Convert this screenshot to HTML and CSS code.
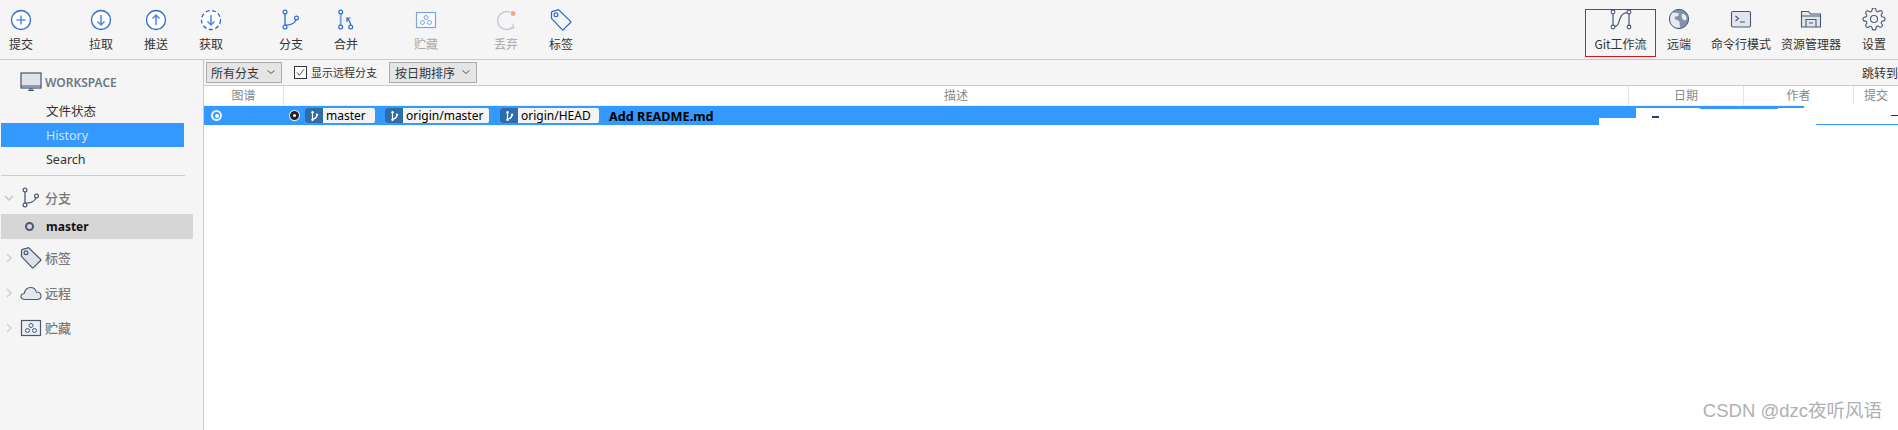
FILE: index.html
```html
<!DOCTYPE html>
<html lang="zh-CN">
<head>
    <meta charset="UTF-8">
    <title>SourceTree</title>
    <link rel="stylesheet" href="styles.css">
</head>
<body>
<svg class="defs">
  <symbol id="i-branch" viewBox="0 0 24 24">
    <path d="M6 5.800v11.400M6 17c6 .5 10-2 11-5.200" fill="none" stroke="currentColor" stroke-width="1.300"/>
    <circle cx="6" cy="4" r="1.900" fill="#fff" stroke="currentColor" stroke-width="1.200"/>
    <circle cx="6" cy="19" r="1.900" fill="#fff" stroke="currentColor" stroke-width="1.200"/>
    <circle cx="17.500" cy="10" r="1.900" fill="#fff" stroke="currentColor" stroke-width="1.200"/>
  </symbol>
  <symbol id="i-ref" viewBox="0 0 24 24">
    <path d="M9 5v14M9 18c5 0 8-3 9-7" fill="none" stroke="currentColor" stroke-width="2.400"/>
    <circle cx="9" cy="4.500" r="2.400" fill="currentColor"/>
    <circle cx="9" cy="19.500" r="2.400" fill="currentColor"/>
    <circle cx="18" cy="9.500" r="2.400" fill="currentColor"/>
  </symbol>
  <symbol id="i-tag" viewBox="0 0 24 24">
    <path d="M3.600 3.400L9 1.800c.4-.1.8 0 1 .3L21.600 13.400c.4.4.4.9 0 1.200l-7.300 7c-.3.3-.8.3-1.100 0L2.900 10.900c-.3-.2-.4-.5-.4-.9V4.500c0-.5.5-.9 1.100-1.100z" fill="var(--tag-fill, none)" stroke="currentColor" stroke-width="1.300"/>
    <circle cx="7" cy="6.800" r="1.900" fill="none" stroke="currentColor" stroke-width="1.200"/>
  </symbol>
  <symbol id="i-stash" viewBox="0 0 24 24">
    <rect x="2.500" y="4.500" width="19" height="15" fill="var(--stash-fill, none)" stroke="currentColor" stroke-width="1.200"/>
    <circle cx="12" cy="9.500" r="2" fill="none" stroke="currentColor" stroke-width="1"/>
    <circle cx="8.500" cy="14.500" r="2" fill="none" stroke="currentColor" stroke-width="1"/>
    <circle cx="15.500" cy="14.500" r="2" fill="none" stroke="currentColor" stroke-width="1"/>
  </symbol>
</svg>

<div class="app">
  <div class="toolbar">
    <div class="tool-group first">
      <div class="tool tool-small">
        <svg class="icon blue" viewBox="0 0 24 24"><circle cx="12" cy="12" r="9.500" fill="#fff" stroke="currentColor" stroke-width="1.300"/><path d="M12 7.500v9M7.500 12h9" stroke="#5b93e6" stroke-width="1.600"/></svg>
        <span>提交</span>
      </div>
    </div>
    <div class="tool-group">
      <div class="tool">
        <svg class="icon blue" viewBox="0 0 24 24"><circle cx="12" cy="12" r="9.500" fill="#fff" stroke="currentColor" stroke-width="1.300"/><path d="M12 7v9.500M8.500 13.500l3.500 3.500 3.500-3.500" fill="none" stroke="#4f8ae0" stroke-width="1.500"/></svg>
        <span>拉取</span>
      </div>
      <div class="tool">
        <svg class="icon blue" viewBox="0 0 24 24"><circle cx="12" cy="12" r="9.500" fill="#fff" stroke="currentColor" stroke-width="1.300"/><path d="M12 17V7.500M8.500 10.500L12 7l3.500 3.500" fill="none" stroke="#4f8ae0" stroke-width="1.500"/></svg>
        <span>推送</span>
      </div>
      <div class="tool">
        <svg class="icon blue" viewBox="0 0 24 24"><circle cx="12" cy="12" r="9.500" fill="#fff" stroke="currentColor" stroke-width="1.300" stroke-dasharray="4 2.500"/><path d="M12 7v9.500M8.500 13.500l3.500 3.500 3.500-3.500" fill="none" stroke="#4f8ae0" stroke-width="1.500"/></svg>
        <span>获取</span>
      </div>
    </div>
    <div class="tool-group">
      <div class="tool">
        <svg class="icon blue"><use href="#i-branch"/></svg>
        <span>分支</span>
      </div>
      <div class="tool">
        <svg class="icon blue" viewBox="0 0 24 24">
          <path d="M6.700 5.800v11.400" stroke="#7ba7ea" stroke-width="2"/>
          <path d="M16.700 17c0-3-1.500-4.500-3.200-6.500M13 14v-4h3.500" fill="none" stroke="currentColor" stroke-width="1.200"/>
          <circle cx="6.700" cy="4" r="1.900" fill="#fff" stroke="currentColor" stroke-width="1.200"/>
          <circle cx="6.700" cy="19" r="1.900" fill="#fff" stroke="currentColor" stroke-width="1.200"/>
          <circle cx="16.700" cy="19" r="1.900" fill="#fff" stroke="currentColor" stroke-width="1.200"/>
        </svg>
        <span>合并</span>
      </div>
    </div>
    <div class="tool-group">
      <div class="tool off">
        <svg class="icon stash-blue"><use href="#i-stash"/></svg>
        <span>贮藏</span>
      </div>
    </div>
    <div class="tool-group">
      <div class="tool off">
        <svg class="icon" viewBox="0 0 24 24">
          <path d="M16 4.200A9 9 0 1 0 19 19" fill="none" stroke="#c3c9d4" stroke-width="1.400"/>
          <path d="M14.500 20.500l5-.5-.5-4.500" fill="none" stroke="#c3c9d4" stroke-width="1.200"/>
          <circle cx="19" cy="5.500" r="2.400" fill="#f7a091"/>
        </svg>
        <span>丢弃</span>
      </div>
      <div class="tool">
        <svg class="icon blue"><use href="#i-tag"/></svg>
        <span>标签</span>
      </div>
    </div>
    <div class="tool-right">
      <div class="tool tool-git">
        <svg class="icon slate" viewBox="0 0 24 24">
          <path d="M4 5.800v11.400M20 5.800v11.400" fill="none" stroke="currentColor" stroke-width="1.200"/>
          <path d="M5.500 18.500C10 18 9.500 14 11 10.500S14 4.500 18.500 5" fill="none" stroke="currentColor" stroke-width="1.200"/>
          <circle cx="4" cy="4" r="1.900" fill="#fff" stroke="currentColor" stroke-width="1.100"/>
          <circle cx="4" cy="19" r="1.900" fill="#fff" stroke="currentColor" stroke-width="1.100"/>
          <circle cx="20" cy="4" r="1.900" fill="#fff" stroke="currentColor" stroke-width="1.100"/>
          <circle cx="20" cy="19" r="1.900" fill="#fff" stroke="currentColor" stroke-width="1.100"/>
        </svg>
        <span>Git工作流</span>
        <i class="red-box"></i>
      </div>
      <div class="tool tool-remote">
        <svg class="icon slate" viewBox="0 0 24 24">
          <circle cx="12" cy="11" r="9.600" fill="#8391ab" stroke="currentColor" stroke-width="1"/>
          <path d="M6 4.500c2 .5 4 0 5.500 1s-1 3-2.500 3-2 2-.5 3 3.500.5 4 2.500-.5 4 1 5.500c-3 .8-7-.3-9-3.500S2.500 7 6 4.500zM15 6c2-.5 4 1 4.500 3.500S18 13 16.500 12 14 7 15 6z" fill="#e8ebf1"/>
        </svg>
        <span>远端</span>
      </div>
      <div class="tool tool-term">
        <svg class="icon slate" viewBox="0 0 24 24">
          <rect x="2.500" y="3.500" width="19" height="15.500" rx="1.500" fill="#e1e5ed" stroke="currentColor" stroke-width="1.100"/>
          <path d="M6.500 8l3 2.500-3 2.500M11 14h5" fill="none" stroke="currentColor" stroke-width="1.100"/>
        </svg>
        <span>命令行模式</span>
      </div>
      <div class="tool tool-explorer">
        <svg class="icon slate" viewBox="0 0 24 24">
          <path d="M2.500 19V3.500h7l2 2.500h10v13z" fill="#e1e5ed" stroke="currentColor" stroke-width="1.100"/>
          <path d="M2.500 8h19M7 19v-7.500h10V19M10 15h4" fill="none" stroke="currentColor" stroke-width="1.100"/>
        </svg>
        <span>资源管理器</span>
      </div>
      <div class="tool tool-settings">
        <svg class="icon slate" viewBox="0 1 24 24">
          <circle cx="12" cy="12" r="3.500" fill="none" stroke="currentColor" stroke-width="1.100"/>
          <path d="M19.400 15a1.650 1.650 0 0 0 .33 1.820l.06.06a2 2 0 0 1 0 2.830 2 2 0 0 1-2.830 0l-.06-.06a1.650 1.650 0 0 0-1.820-.33 1.650 1.650 0 0 0-1 1.510V21a2 2 0 0 1-2 2 2 2 0 0 1-2-2v-.09A1.650 1.650 0 0 0 9 19.400a1.650 1.650 0 0 0-1.820.33l-.06.06a2 2 0 0 1-2.830 0 2 2 0 0 1 0-2.830l.06-.06a1.650 1.650 0 0 0 .33-1.820 1.650 1.650 0 0 0-1.510-1H3a2 2 0 0 1-2-2 2 2 0 0 1 2-2h.09A1.650 1.650 0 0 0 4.600 9a1.650 1.650 0 0 0-.33-1.820l-.06-.06a2 2 0 0 1 0-2.830 2 2 0 0 1 2.830 0l.06.06a1.650 1.650 0 0 0 1.820.33H9a1.650 1.650 0 0 0 1-1.510V3a2 2 0 0 1 2-2 2 2 0 0 1 2 2v.09a1.650 1.650 0 0 0 1 1.510 1.650 1.650 0 0 0 1.820-.33l.06-.06a2 2 0 0 1 2.830 0 2 2 0 0 1 0 2.830l-.06.06a1.650 1.650 0 0 0-.33 1.820V9a1.650 1.650 0 0 0 1.510 1H21a2 2 0 0 1 2 2 2 2 0 0 1-2 2h-.09a1.650 1.650 0 0 0-1.510 1z" fill="none" stroke="currentColor" stroke-width="1.100"/>
        </svg>
        <span>设置</span>
      </div>
    </div>
  </div>

  <div class="main">
    <div class="sidebar">
      <div class="ws-head">
        <svg class="side-icon" viewBox="0 0 24 24">
          <rect x="2" y="2" width="20" height="15" fill="#e0e3ea" stroke="#44546f" stroke-width="1.200"/>
          <path d="M2 15h20M9 19.500h6M11 17v2.500M13 17v2.500" fill="none" stroke="#44546f" stroke-width="1.200"/>
        </svg>
        <span>WORKSPACE</span>
      </div>
      <div class="ws-item">文件状态</div>
      <div class="ws-item active">History</div>
      <div class="ws-item">Search</div>
      <div class="side-line"></div>

      <div class="side-group open">
        <svg class="chev" viewBox="0 0 10 10"><path d="M1 3l4 4 4-4" fill="none" stroke="#c4c4c4" stroke-width="1.500"/></svg>
        <svg class="side-icon slate"><use href="#i-branch"/></svg>
        <span>分支</span>
      </div>
      <div class="branch-row"><i class="branch-dot"></i>master</div>
      <div class="side-group">
        <svg class="chev" viewBox="0 0 10 10"><path d="M3 1l4 4-4 4" fill="none" stroke="#d0d0d0" stroke-width="1.500"/></svg>
        <svg class="side-icon slate tag-fill"><use href="#i-tag"/></svg>
        <span>标签</span>
      </div>
      <div class="side-group">
        <svg class="chev" viewBox="0 0 10 10"><path d="M3 1l4 4-4 4" fill="none" stroke="#d0d0d0" stroke-width="1.500"/></svg>
        <svg class="side-icon slate" viewBox="0 0 24 24"><path d="M6 18.500c-2.500 0-4-1.300-4-3s1.300-3 3.200-3C6 9 8.500 6.500 11.500 6.500c3.300 0 5.300 2.300 5.800 4.500 2.800 0 4.700 1.800 4.700 4s-1.500 3.500-4 3.500z" fill="#e4e7ee" stroke="currentColor" stroke-width="1.100"/></svg>
        <span>远程</span>
      </div>
      <div class="side-group">
        <svg class="chev" viewBox="0 0 10 10"><path d="M3 1l4 4-4 4" fill="none" stroke="#d0d0d0" stroke-width="1.500"/></svg>
        <svg class="side-icon slate stash-fill"><use href="#i-stash"/></svg>
        <span>贮藏</span>
      </div>
    </div>

    <div class="content">
      <div class="filter-bar">
        <div class="select select-branch">所有分支<svg class="caret" viewBox="0 0 10 10"><path d="M1.500 3.500L5 6.500l3.500-3" fill="none" stroke="#555" stroke-width="1"/></svg></div>
        <label class="check"><i class="check-box"><svg viewBox="0 0 14 14"><path d="M2.500 7l3 3.500 6-7.500" fill="none" stroke="#333" stroke-width="1.100"/></svg></i>显示远程分支</label>
        <div class="select select-sort">按日期排序<svg class="caret" viewBox="0 0 10 10"><path d="M1.500 3.500L5 6.500l3.500-3" fill="none" stroke="#555" stroke-width="1"/></svg></div>
        <div class="jump">跳转到</div>
      </div>
      <div class="log-head">
        <div class="col col-graph">图谱</div>
        <div class="col col-desc">描述</div>
        <div class="col col-date">日期</div>
        <div class="col col-author">作者</div>
        <div class="col col-commit">提交</div>
      </div>
      <div class="log-row">
        <i class="radio"></i>
        <i class="node"></i>
        <div class="ref ref-master"><span class="ref-badge"><svg class="ref-icon"><use href="#i-ref"/></svg></span><span>master</span></div>
        <div class="ref ref-origin"><span class="ref-badge"><svg class="ref-icon"><use href="#i-ref"/></svg></span><span>origin/master</span></div>
        <div class="ref ref-head"><span class="ref-badge"><svg class="ref-icon"><use href="#i-ref"/></svg></span><span>origin/HEAD</span></div>
        <b class="subject">Add README.md</b>
        <!-- painted-over part of the screenshot -->
        <i class="wipe wipe-a"></i>
        <i class="wipe wipe-b"></i>
        <i class="wipe wipe-c"></i>
        <i class="strip strip-a"></i>
        <i class="strip strip-b"></i>
        <i class="strip strip-c"></i>
        <i class="tick tick-a"></i>
        <i class="tick tick-b"></i>
      </div>
    </div>
  </div>
  <div class="watermark">CSDN @dzc夜听风语</div>
</div>
</body>
</html>
```

FILE: styles.css
```css
* {
    box-sizing: border-box;
}
body {
    margin: 0;
    font-family: "Noto Sans", "Noto Sans CJK SC", sans-serif;
    font-size: 12px;
    color: #333;
    background: #fff;
    overflow: hidden;
}
.defs {
    display: none;
}
.app {
    position: relative;
    width: 1898px;
    height: 430px;
    display: flex;
    flex-direction: column;
    overflow: hidden;
}

/* toolbar */
.toolbar {
    height: 60px;
    flex: none;
    display: flex;
    background: #f5f5f5;
    border-bottom: 1px solid #ccc;
}
.tool-group {
    display: flex;
    margin-right: 25px;
}
.tool-group.first {
    margin-right: 31.5px;
}
.tool {
    position: relative;
    width: 55px;
    height: 59px;
    padding-top: 8px;
    display: flex;
    flex-direction: column;
    align-items: center;
    line-height: 16px;
    white-space: nowrap;
    font-family: "Noto Sans CJK SC", sans-serif;
}
.tool span {
    margin-top: 4px;
}
.tool-small {
    width: 42px;
}
.tool.off {
    color: #aaa;
}
.icon {
    width: 24px;
    height: 24px;
    flex: none;
}
.blue {
    color: #2a6ad0;
}
.slate {
    color: #4a5872;
}
.stash-blue {
    color: #7fa5e0;
    --stash-fill: #f9fbff;
}
.tool-right {
    margin-left: auto;
    display: flex;
}
.tool-git {
    width: 71px;
}
.tool-remote {
    width: 46px;
}
.tool-term {
    width: 78px;
}
.tool-explorer {
    width: 62px;
}
.tool-settings {
    width: 48px;
    margin-left: 8px;
}
.red-box {
    position: absolute;
    left: 0;
    right: 0;
    top: 9px;
    height: 48px;
    border: 1px solid #e3141a;
}

/* sidebar */
.main {
    flex: 1;
    display: flex;
    min-height: 0;
}
.sidebar {
    width: 204px;
    flex: none;
    padding-left: 1px;
    background: #f5f5f5;
    border-right: 1px solid #c8c8c8;
}
.ws-head {
    height: 39px;
    padding-left: 18px;
    padding-top: 6px;
    display: flex;
    align-items: center;
    color: #6e7885;
    font-weight: 600;
}
.ws-head .side-icon {
    margin-right: 2px;
}
.side-icon {
    width: 24px;
    height: 24px;
    flex: none;
}
.ws-item {
    width: 183px;
    height: 24px;
    line-height: 25px;
    padding-left: 45px;
    color: #333;
    font-size: 12.5px;
}
.ws-item.active {
    background: #3399ff;
    color: #cfe4fb;
}
.side-line {
    width: 184px;
    height: 1px;
    margin-top: 4px;
    background: #ccc;
}
.side-group {
    height: 35px;
    display: flex;
    align-items: center;
    font-size: 13px;
    color: #7a7a7a;
    font-weight: 500;
}
.side-group.open {
    height: 33px;
    margin-top: 5px;
}
.branch-row + .side-group {
    margin-top: 1px;
}
.chev {
    width: 10px;
    height: 10px;
    margin: 0 5px 0 3px;
    flex: none;
}
.side-group .side-icon {
    margin-right: 2px;
}
.tag-fill {
    --tag-fill: #dfe2ea;
}
.stash-fill {
    --stash-fill: #eceef3;
}
.branch-row {
    width: 192px;
    height: 25px;
    display: flex;
    align-items: center;
    background: #d6d6d6;
    font-weight: 700;
    color: #111;
}
.branch-dot {
    width: 9px;
    height: 9px;
    margin: 0 12px 0 24px;
    border: 2px solid #4a5872;
    border-radius: 50%;
}

/* history */
.content {
    flex: 1;
    min-width: 0;
}
.filter-bar {
    height: 26px;
    display: flex;
    align-items: center;
    padding: 0 0 1px 2px;
    background: #f5f5f5;
    border-bottom: 1px solid #ccc;
    font-family: "Noto Sans CJK SC", sans-serif;
}
.select {
    height: 21px;
    display: flex;
    align-items: center;
    padding-left: 4px;
    background: #e5e5e5;
    border: 1px solid #adadad;
}
.select-branch {
    width: 76px;
}
.select-sort {
    width: 88px;
    padding-left: 5px;
}
.caret {
    width: 10px;
    height: 10px;
    margin-left: auto;
    margin-right: 5px;
}
.check {
    display: flex;
    align-items: center;
    flex: none;
    width: 83px;
    margin: 0 12px;
    font-size: 11px;
    white-space: nowrap;
}
.check-box {
    width: 13px;
    height: 13px;
    margin-right: 4px;
    flex: none;
    background: #fff;
    border: 1px solid #333;
    display: flex;
}
.check-box svg {
    width: 11px;
    height: 11px;
}
.jump {
    margin-left: auto;
    width: 36px;
    white-space: nowrap;
}
.log-head {
    height: 20px;
    display: flex;
    border-bottom: 1px solid #eee;
    color: #888;
    font-family: "Noto Sans CJK SC", sans-serif;
    line-height: 17px;
    text-align: center;
}
.col {
    border-right: 1px solid #e4e4e4;
    white-space: nowrap;
}
.col-graph {
    width: 80px;
}
.col-desc {
    width: 1345px;
}
.col-date {
    width: 115px;
}
.col-author {
    width: 110px;
}
.col-commit {
    flex: 1;
    border-right: 0;
    overflow: hidden;
}
.log-row {
    position: relative;
    height: 19px;
    display: flex;
    align-items: center;
    background: #3399ff;
    color: #000;
}
.radio {
    width: 11px;
    height: 11px;
    margin-left: 7px;
    border: 2px solid #e8f2fd;
    border-radius: 50%;
    background: #3399ff;
    position: relative;
}
.radio::after {
    content: "";
    position: absolute;
    left: 1.500px;
    top: 1.500px;
    width: 4px;
    height: 4px;
    border-radius: 50%;
    background: #fff;
}
.node {
    width: 9px;
    height: 9px;
    margin-left: 68px;
    border-radius: 50%;
    background: #fff;
    border: 3px solid #222;
    box-shadow: 0 0 0 1px #e4eefa;
}
.ref {
    height: 15px;
    display: flex;
    align-items: center;
    margin-left: 6px;
    margin-right: 3px;
    background: #f4f4f4;
    border-radius: 2px;
    line-height: 15px;
    overflow: hidden;
}
.ref-master {
    width: 70px;
}
.ref-origin {
    width: 104px;
    margin-left: 7px;
}
.ref-head {
    width: 99px;
    margin-left: 8px;
}
.ref-badge {
    width: 18px;
    height: 15px;
    margin-right: 3px;
    flex: none;
    display: flex;
    justify-content: center;
    align-items: center;
    background: #2f6cab;
}
.ref-icon {
    width: 12px;
    height: 12px;
    color: #fff;
}
.subject {
    margin-left: 7px;
    font-size: 12.7px;
    font-weight: 700;
    color: #000;
}

/* the white patches and slivers on the right of the selected row */
.wipe,
.strip,
.tick {
    position: absolute;
    display: block;
}
.wipe {
    background: #fff;
}
.wipe-a {
    left: 1395px;
    right: 0;
    top: 12px;
    bottom: 0;
}
.wipe-b {
    left: 1432px;
    right: 0;
    top: 2px;
    height: 10px;
}
.wipe-c {
    left: 1600px;
    right: 0;
    top: -2px;
    height: 4px;
}
.strip {
    background: #3399ff;
}
.strip-a {
    left: 1432px;
    width: 64px;
    top: 0;
    height: 2px;
}
.strip-b {
    left: 1496px;
    width: 78px;
    top: 0;
    height: 3px;
}
.strip-c {
    left: 1612px;
    right: 0;
    top: 17.500px;
    height: 1px;
}
.tick-a {
    left: 1448px;
    width: 7px;
    top: 10px;
    height: 2px;
    background: #20406a;
}
.tick-b {
    left: 1687px;
    width: 7px;
    top: 9px;
    height: 1px;
    background: #333;
}
.watermark {
    position: absolute;
    right: 16px;
    top: 399px;
    font-family: "Liberation Sans", "Noto Sans CJK SC", sans-serif;
    font-size: 18.5px;
    line-height: 24px;
    color: #b0b0b0;
    white-space: nowrap;
}
```
